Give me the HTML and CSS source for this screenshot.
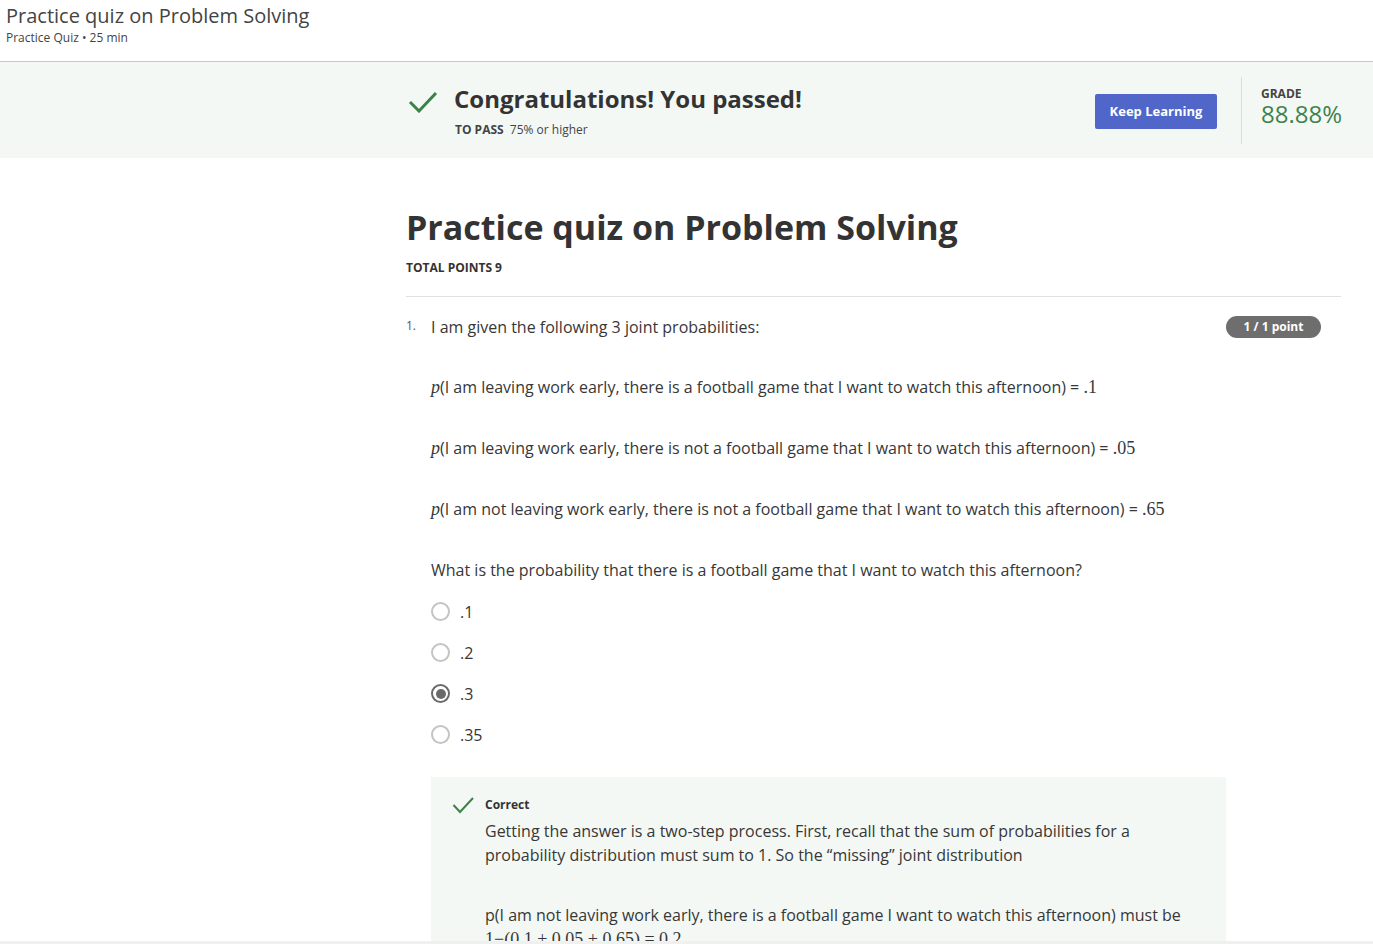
FILE: index.html
```html
<!DOCTYPE html>
<html>
<head>
<meta charset="utf-8">
<link rel="stylesheet" href="styles.css">
</head>
<body>
<header class="top">
  <div class="top-title">Practice quiz on Problem Solving</div>
  <div class="top-sub">Practice Quiz • 25 min</div>
</header>
<section class="banner">
  <div class="banner-left">
    <svg class="check-big" width="30" height="22" viewBox="0 0 30 22"><polyline points="2,11 11,20 28,2" fill="none" stroke="#3b8247" stroke-width="3"/></svg>
    <div class="pass-text">
      <div class="pass-title">Congratulations! You passed!</div>
      <div class="pass-req"><b>TO PASS</b> 75% or higher</div>
    </div>
  </div>
  <div class="banner-right">
    <button class="keep">Keep Learning</button>
    <div class="vdiv"></div>
    <div class="grade">
      <div class="grade-label">GRADE</div>
      <div class="grade-val">88.88%</div>
    </div>
  </div>
</section>
<main class="main">
  <h1 class="quiz-title">Practice quiz on Problem Solving</h1>
  <div class="total">TOTAL POINTS 9</div>
  <div class="q">
    <div class="q-num">1.</div>
    <div class="q-body">
      <div class="q-head">
        <p class="q-text">I am given the following 3 joint probabilities:</p>
        <span class="badge">1 / 1 point</span>
      </div>
      <p class="prob"><span class="m i">p</span>(I am leaving work early, there is a football game that I want to watch this afternoon) = <span class="m">.1</span></p>
      <p class="prob"><span class="m i">p</span>(I am leaving work early, there is not a football game that I want to watch this afternoon) = <span class="m">.05</span></p>
      <p class="prob"><span class="m i">p</span>(I am not leaving work early, there is not a football game that I want to watch this afternoon) = <span class="m">.65</span></p>
      <p class="prob">What is the probability that there is a football game that I want to watch this afternoon?</p>
      <div class="opts">
        <div class="opt"><span class="radio"></span>.1</div>
        <div class="opt"><span class="radio"></span>.2</div>
        <div class="opt"><span class="radio on"></span>.3</div>
        <div class="opt"><span class="radio"></span>.35</div>
      </div>
      <div class="fb">
        <svg class="check-small" width="22" height="17" viewBox="0 0 22 17"><polyline points="1.5,8 8,15 21,1" fill="none" stroke="#3b8247" stroke-width="2"/></svg>
        <div class="fb-body">
          <div class="fb-label">Correct</div>
          <p class="fb-text">Getting the answer is a two-step process. First, recall that the sum of probabilities for a probability distribution must sum to 1. So the “missing” joint distribution</p>
          <p class="fb-text fb-gap">p(I am not leaving work early, there is a football game I want to watch this afternoon) must be <span class="m">1−(0.1 + 0.05 + 0.65) = 0.2</span></p>
        </div>
      </div>
    </div>
  </div>
</main>
<div class="scrollbar"></div>
</body>
</html>
```
FILE: styles.css
```css
* { box-sizing: border-box; }
html, body { margin: 0; padding: 0; }
body {
  font-family: "Open Sans", "Noto Sans", sans-serif;
  color: #373737;
  background: #fff;
  overflow: hidden;
  height: 944px;
}
.top {
  height: 62px;
  padding: 3px 6px 0;
  border-bottom: 1px solid #c8c8c8;
}
.top-title { font-size: 20px; line-height: 26px; color: #444; }
.top-sub { font-size: 12px; line-height: 16px; color: #444; margin-top: 1px; }

.banner {
  height: 96px;
  background: #f4f8f5;
  display: flex;
  align-items: center;
  justify-content: space-between;
  padding: 0 32px 0 406px;
}
.banner-left { display: flex; align-items: flex-start; align-self: flex-start; padding-top: 23px; }
.check-big { margin: 6px 0 0 2px; flex-shrink: 0; }
.pass-text { margin-left: 16px; }
.pass-title { font-size: 24px; font-weight: 700; line-height: 28px; color: #333; }
.pass-req { font-size: 12px; line-height: 16px; margin-top: 9px; color: #444; padding-left: 1px; }
.pass-req b { font-weight: 700; margin-right: 3px; }
.banner-right { display: flex; align-items: center; height: 100%; }
.keep {
  background: #5067c9;
  color: #fff;
  border: none;
  border-radius: 2px;
  width: 122px;
  height: 35px;
  font-family: "Open Sans", sans-serif;
  font-size: 13px;
  font-weight: 700;
  padding: 0;
  margin-top: 2px;
}
.vdiv { width: 1px; height: 67px; background: #dcdcdc; margin: 0 19px 0 24px; }
.grade { width: 80px; padding-bottom: 8px; }
.grade-label { font-size: 12px; font-weight: 700; line-height: 15px; color: #444; }
.grade-val { font-size: 24px; line-height: 26px; color: #3e834c; }

.main { width: 935px; margin-left: 406px; padding-top: 47px; }
.quiz-title { margin: 0; font-size: 34px; font-weight: 700; line-height: 44px; color: #333; }
.total { font-size: 12px; font-weight: 700; line-height: 16px; margin-top: 11px; color: #333; }
.q { display: flex; border-top: 1px solid #e1e1e1; margin-top: 20px; padding-top: 19px; }
.q-num { width: 25px; font-size: 12px; line-height: 20px; color: #555; }
.q-body { flex: 1; }
.q-head { display: flex; justify-content: space-between; align-items: center; padding-right: 20px; }
.q-text { margin: 0; font-size: 16px; line-height: 22px; }
.badge {
  background: #6e6e6e;
  color: #fff;
  font-size: 12px;
  font-weight: 700;
  border-radius: 12px;
  width: 95px;
  height: 22px;
  line-height: 22px;
  text-align: center;
}
.prob { margin: 38px 0 0; font-size: 16px; line-height: 23px; }
.m { font-family: "Liberation Serif", "DejaVu Serif", serif; font-size: 18px; }
.i { font-style: italic; }
.opts { margin-top: 9px; }
.opt { display: flex; align-items: center; height: 41px; font-size: 16px; }
.radio {
  width: 19px; height: 19px;
  border: 2px solid #c4c4c4;
  border-radius: 50%;
  margin-right: 10px;
  display: inline-flex; align-items: center; justify-content: center;
  flex-shrink: 0;
}
.radio.on { border-color: #6a6a6a; }
.radio.on::after { content: ""; width: 10px; height: 10px; border-radius: 50%; background: #6a6a6a; }
.fb {
  width: 795px;
  margin-top: 22px;
  background: #f4f8f5;
  display: flex;
  padding: 20px 30px 0 21px;
  min-height: 200px;
}
.check-small { margin-top: 0; flex-shrink: 0; }
.fb-body { margin-left: 11px; }
.fb-label { font-size: 12px; font-weight: 700; line-height: 16px; color: #333; }
.fb-text { margin: 6px 0 0; font-size: 16px; line-height: 24px; }
.fb-gap { margin-top: 36px; }
.scrollbar { position: fixed; left: 0; right: 0; bottom: 0; height: 3px; background: #f0f0f0; }
```
